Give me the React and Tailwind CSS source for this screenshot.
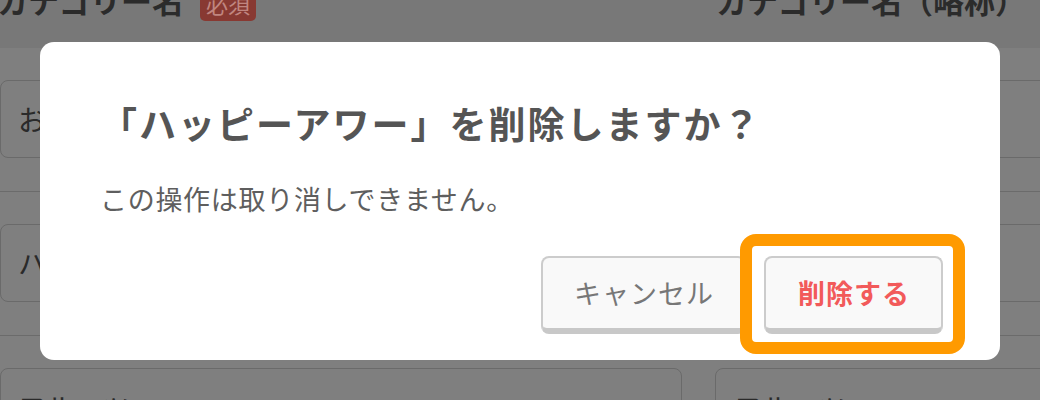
import React from "react";

function Row({ left, right }) {
  return (
    <div className="grid grid-cols-[682px_1fr] gap-x-[33px] pt-[32px] pb-[33px] border-b border-[#6b6b6b]">
      <div className="h-[78px] rounded-[8px] border border-[#6a6a6a] flex items-center pl-[17px] text-[28px] text-[#2a2a2a] leading-none whitespace-nowrap overflow-hidden">
        {left}
      </div>
      <div className="h-[78px] w-[400px] rounded-[8px] border border-[#6a6a6a] flex items-center pl-[18px] text-[28px] text-[#2a2a2a] leading-none whitespace-nowrap overflow-hidden">
        {right}
      </div>
    </div>
  );
}

export default function App() {
  return (
    <div className="relative w-[1040px] h-[400px] overflow-hidden bg-[#7f7f7f] font-['Noto_Sans_CJK_JP','Noto_Sans',sans-serif]">
      {/* header */}
      <div className="h-[48px] bg-[#787878] grid grid-cols-[682px_1fr] gap-x-[33px]">
        <div className="flex items-start gap-[17px] ml-[-3px]">
          <span className="-mt-[16px] text-[31px] leading-[31px] font-bold text-[#2b2b2b] whitespace-nowrap">カテゴリー名</span>
          <span className="-mt-[15px] h-[36px] px-[6px] rounded-[5px] bg-[#883932] text-[#c08680] text-[22px] leading-[36px] whitespace-nowrap">必須</span>
        </div>
        <div className="ml-[1px]">
          <span className="block -mt-[16px] text-[31px] leading-[31px] font-bold text-[#2b2b2b] whitespace-nowrap">カテゴリー名（略称）</span>
        </div>
      </div>

      <Row left="おすすめ" right="おすすめ" />
      <Row left="ハッピーアワー" right="ハッピー" />
      <Row left="フルーツ" right="フルーツ" />

      {/* modal */}
      <div className="absolute left-[40px] top-[42px] w-[960px] h-[318px] rounded-[14px] bg-white pl-[60px] pr-[57px] pt-[59px] flex flex-col">
        <h2 className="text-[37px] leading-[44px] font-bold tracking-[2px] text-[#555555] whitespace-nowrap">
          「ハッピーアワー」を削除しますか？
        </h2>
        <p className="mt-[38px] text-[27px] leading-[32px] tracking-[0.7px] text-[#5e5e5e] whitespace-nowrap">
          この操作は取り消しできません。
        </p>
        <div className="mt-[41px] flex justify-end gap-[18px]">
          <button className="h-[78px] pl-[31px] pr-[30px] rounded-[8px] border-2 border-b-[6px] border-[#cccccc] border-b-[#c8c8c8] bg-[#f9f9f9] text-[27px] tracking-[1px] text-[#777777] whitespace-nowrap">
            キャンセル
          </button>
          <div className="relative">
            <button className="h-[78px] pl-[32px] pr-[31px] rounded-[8px] border-2 border-b-[6px] border-[#cccccc] border-b-[#c8c8c8] bg-[#f9f9f9] text-[27px] tracking-[1px] font-bold text-[#f25a5a] whitespace-nowrap">
              削除する
            </button>
            <div className="absolute -left-[24px] -right-[22px] -top-[22px] -bottom-[20px] rounded-[16px] border-[12px] border-[#ff9a00] pointer-events-none" />
          </div>
        </div>
      </div>
    </div>
  );
}
